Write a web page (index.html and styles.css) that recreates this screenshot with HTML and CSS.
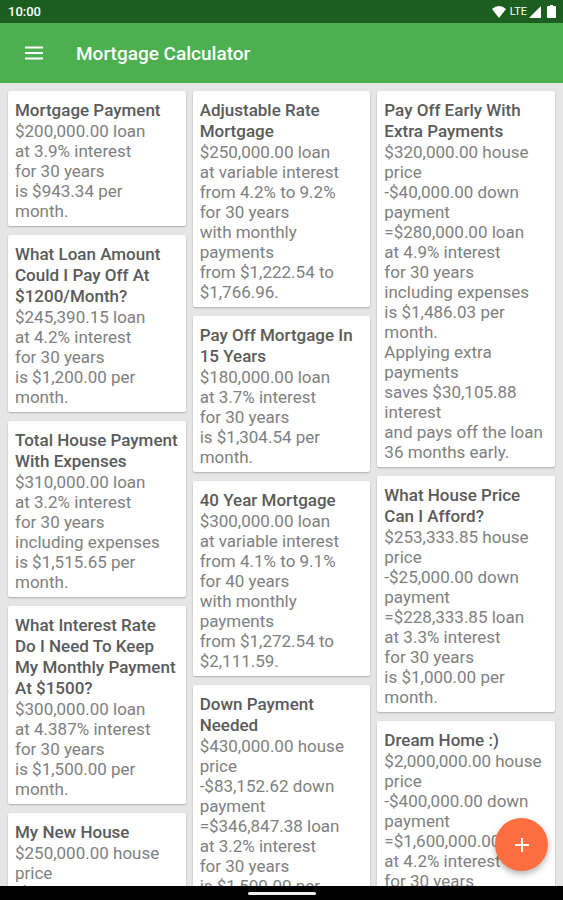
FILE: index.html
```html
<!DOCTYPE html>
<html lang="en">
<head>
    <meta charset="UTF-8">
    <meta name="viewport" content="width=device-width, initial-scale=1.0">
    <title>Mortgage Calculator</title>

    <link rel="stylesheet" href="styles.css">
</head>
<body>

    <div class="status">
        <span class="clock">10:00</span>
        <svg class="wifi" width="14" height="12" viewBox="0 0 14 12"><path d="M0 3Q7-3 14 3L7 12Z" fill="#fff"/></svg>
        <span class="network">LTE</span>
        <svg class="signal" width="12" height="12" viewBox="0 0 12 12"><path d="M12 0V12H0Z" fill="#fff"/></svg>
        <svg class="battery" width="9" height="13" viewBox="0 0 9 13"><path d="M3 0H6V1H8Q9 1 9 2V12Q9 13 8 13H1Q0 13 0 12V2Q0 1 1 1H3Z" fill="#fff"/></svg>
    </div>

    <header>
        <button class="menu" type="button" aria-label="Menu">
            <svg width="18" height="14" viewBox="0 0 18 14"><path d="M0 1.5H18M0 7H18M0 12.5H18" stroke="#fff" stroke-width="2"/></svg>
        </button>
        <h1>Mortgage Calculator</h1>
    </header>

    <main>
        <div class="column">
            <article class="card">
                <h2>Mortgage Payment</h2>
                <p>$200,000.00 loan<br>at 3.9% interest<br>for 30 years<br>is $943.34 per month.</p>
            </article>
            <article class="card">
                <h2>What Loan Amount Could I Pay Off At $1200/Month?</h2>
                <p>$245,390.15 loan<br>at 4.2% interest<br>for 30 years<br>is $1,200.00 per month.</p>
            </article>
            <article class="card">
                <h2>Total House Payment With Expenses</h2>
                <p>$310,000.00 loan<br>at 3.2% interest<br>for 30 years<br>including expenses<br>is $1,515.65 per month.</p>
            </article>
            <article class="card">
                <h2>What Interest Rate Do I Need To Keep My Monthly Payment At $1500?</h2>
                <p>$300,000.00 loan<br>at 4.387% interest<br>for 30 years<br>is $1,500.00 per month.</p>
            </article>
            <article class="card">
                <h2>My New House</h2>
                <p>$250,000.00 house price<br>-$50,000.00 down payment</p>
            </article>
        </div>

        <div class="column">
            <article class="card">
                <h2>Adjustable Rate Mortgage</h2>
                <p>$250,000.00 loan<br>at variable interest<br>from 4.2% to 9.2%<br>for 30 years<br>with monthly payments<br>from $1,222.54 to $1,766.96.</p>
            </article>
            <article class="card">
                <h2>Pay Off Mortgage In 15 Years</h2>
                <p>$180,000.00 loan<br>at 3.7% interest<br>for 30 years<br>is $1,304.54 per month.</p>
            </article>
            <article class="card">
                <h2>40 Year Mortgage</h2>
                <p>$300,000.00 loan<br>at variable interest<br>from 4.1% to 9.1%<br>for 40 years<br>with monthly payments<br>from $1,272.54 to $2,111.59.</p>
            </article>
            <article class="card">
                <h2>Down Payment Needed</h2>
                <p>$430,000.00 house price<br>-$83,152.62 down payment<br>=$346,847.38 loan<br>at 3.2% interest<br>for 30 years<br>is $1,500.00 per month.</p>
            </article>
        </div>

        <div class="column">
            <article class="card">
                <h2>Pay Off Early With Extra Payments</h2>
                <p>$320,000.00 house price<br>-$40,000.00 down payment<br>=$280,000.00 loan<br>at 4.9% interest<br>for 30 years<br>including expenses<br>is $1,486.03 per month.<br>Applying extra payments<br>saves $30,105.88 interest<br>and pays off the loan 36 months early.</p>
            </article>
            <article class="card">
                <h2>What House Price Can I Afford?</h2>
                <p>$253,333.85 house price<br>-$25,000.00 down payment<br>=$228,333.85 loan<br>at 3.3% interest<br>for 30 years<br>is $1,000.00 per month.</p>
            </article>
            <article class="card">
                <h2>Dream Home :)</h2>
                <p>$2,000,000.00 house price<br>-$400,000.00 down payment<br>=$1,600,000.00 loan<br>at 4.2% interest<br>for 30 years</p>
            </article>
        </div>

        <button class="add" type="button" aria-label="Add calculation">
            <svg width="14" height="14" viewBox="0 0 14 14"><path d="M7 0V14M0 7H14" stroke="#fff" stroke-width="2"/></svg>
        </button>
    </main>

    <div class="navbar">
        <span class="handle"></span>
    </div>

</body>
</html>
```
FILE: styles.css
```css
body {
    margin: 0;
    height: 100vh;
    display: flex;
    flex-direction: column;
    overflow: hidden;
    font-family: Roboto, sans-serif;
    background-color: #e6e6e6;
}
h1, h2, p {
    margin: 0;
}
button {
    padding: 0;
    border: none;
    display: flex;
    align-items: center;
    justify-content: center;
    cursor: pointer;
}
.status {
    flex: none;
    height: 23px;
    padding: 0 7px 0 8px;
    display: flex;
    align-items: center;
    background-color: #1b5e20;
    color: #fff;
}
.clock {
    margin-right: auto;
    font-size: 13px;
    font-weight: 500;
}
.network {
    margin: 0 2px 0 4px;
    font-size: 11px;
}
.battery {
    margin-left: 6px;
}
header {
    flex: none;
    height: 60px;
    padding-left: 16px;
    display: flex;
    align-items: center;
    background-color: #4caf50;
    color: #fff;
}
.menu {
    width: 36px;
    height: 36px;
    margin-right: 24px;
    background: none;
}
h1 {
    font-size: 19px;
    font-weight: 500;
}
main {
    flex: 1;
    min-height: 0;
    position: relative;
    box-sizing: border-box;
    padding: 8px 8px 0;
    display: grid;
    grid-template-columns: 1fr 1fr 1fr;
    gap: 7px;
    overflow: hidden;
}
.column {
    min-width: 0;
    display: flex;
    flex-direction: column;
    gap: 9px;
}
.card {
    padding: 9px 7px 5px;
    border-radius: 2px;
    background-color: #fff;
    box-shadow: 0 1px 2px rgba(0, 0, 0, 0.25);
}
.card h2 {
    font-size: 17px;
    font-weight: 500;
    line-height: 21px;
    color: #5a5a5a;
}
.card p {
    padding-right: 4px;
    font-size: 17px;
    font-weight: 400;
    line-height: 20px;
    color: #808080;
}
.add {
    position: absolute;
    right: 15px;
    bottom: 15px;
    width: 53px;
    height: 53px;
    border-radius: 50%;
    background-color: #ff6e40;
    box-shadow: 0 3px 6px rgba(0, 0, 0, 0.3);
}
.navbar {
    flex: none;
    height: 14px;
    display: flex;
    align-items: flex-end;
    justify-content: center;
    background-color: #000;
}
.handle {
    width: 68px;
    height: 3px;
    margin-bottom: 5px;
    border-radius: 2px;
    background-color: #eee;
}
```
